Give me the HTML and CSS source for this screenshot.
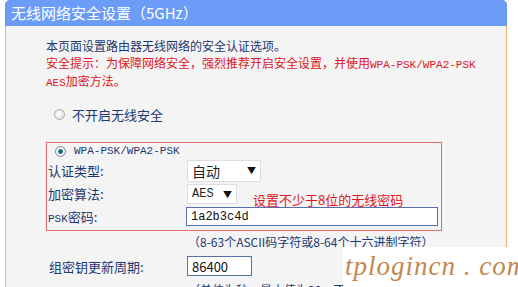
FILE: index.html
```html
<!DOCTYPE html>
<html>
<head>
    <title>无线网络安全设置</title>
    <link rel="stylesheet" href="styles.css">
</head>
<body>
<div class="panel">
    <div class="panel-title">无线网络安全设置（5GHz）</div>
    <div class="panel-body">
        <p class="intro">本页面设置路由器无线网络的安全认证选项。</p>
        <p class="warning">安全提示：为保障网络安全，强烈推荐开启安全设置，并使用<span class="mono">WPA-PSK/WPA2-PSK</span><br><span class="mono">AES</span>加密方法。</p>

        <div class="radio-row off-row">
            <span class="radio"></span>
            <span>不开启无线安全</span>
        </div>

        <div class="psk-box">
            <div class="radio-row wpa-row">
                <span class="radio checked"></span>
                <span class="mono">WPA-PSK/WPA2-PSK</span>
            </div>
            <div class="form-row">
                <span class="label">认证类型:</span>
                <span class="select select-auth">自动<span class="arrow">▼</span></span>
            </div>
            <div class="form-row">
                <span class="label">加密算法:</span>
                <span class="select select-aes"><span class="mono">AES</span><span class="arrow">▼</span></span>
                <span class="tip">设置不少于8位的无线密码</span>
            </div>
            <div class="form-row">
                <span class="label"><span class="mono">PSK</span>密码:</span>
                <span class="text-input psk-input mono">1a2b3c4d</span>
            </div>
        </div>

        <div class="hint">（8-63个ASCII码字符或8-64个十六进制字符）</div>

        <div class="form-row group-row">
            <span class="label">组密钥更新周期:</span>
            <span class="text-input period-input">86400</span>
        </div>
        <div class="hint">（单位为秒，最小值为30，不更新则为0）</div>
    </div>
</div>
<div class="watermark">tplogincn . com</div>
</body>
</html>
```

FILE: styles.css
```css
body {
    margin: 0;
    padding: 0;
    background-color: #ffffff;
    font-family: "Noto Sans CJK SC", "Liberation Sans", sans-serif;
    font-size: 12px;
    color: #1c3870;
    overflow: hidden;
    height: 287px;
}
.panel {
    margin-left: 5px;
    width: 500px;
    height: 300px;
    background: #f4f4f4;
    border-left: 1px solid #f0b26a;
    border-right: 1px solid #f0b26a;
    border-radius: 5px 5px 0 0;
}
.panel-title {
    height: 26px;
    line-height: 25px;
    background: #6b9cf7;
    color: #ffffff;
    font-size: 15px;
    padding-left: 6px;
    border-radius: 5px 5px 0 0;
    margin: 0 -1px;
}
.panel-body {
    padding: 12px 0 0 40px;
}
.mono {
    font-family: "Liberation Mono", "DejaVu Sans Mono", monospace;
    font-size: 11px;
}
.intro, .warning {
    margin: 0;
    line-height: 16px;
}
.warning {
    color: #e0141e;
    margin-top: 1px;
}
.radio-row {
    display: flex;
    align-items: center;
    gap: 7px;
}
.off-row {
    height: 20px;
    margin-top: 13px;
    padding-left: 8px;
    font-size: 13px;
}
.radio {
    width: 9px;
    height: 9px;
    border-radius: 50%;
    border: 1px solid #a9a9a9;
    background: radial-gradient(circle at 40% 40%, #ffffff, #d6d6d6);
}
.radio.checked {
    background: radial-gradient(circle, #1c4a66 0, #2f7a96 2px, #ffffff 3px, #d6d6d6 100%);
    border-color: #7a8a9a;
}
.psk-box {
    margin-top: 18px;
    width: 393px;
    height: 87px;
    border: 1px solid #e06a6a;
    padding-left: 1px;
}
.wpa-row {
    height: 16px;
    padding-left: 7px;
    gap: 8px;
}
.form-row {
    display: flex;
    align-items: center;
    height: 23px;
}
.label {
    width: 139px;
    font-size: 13px;
}
.select {
    display: flex;
    align-items: center;
    justify-content: space-between;
    background: #ffffff;
    border: 1px solid #dedede;
    padding: 0 4px;
    box-sizing: border-box;
    font-size: 14px;
    color: #222222;
}
.select-auth {
    width: 74px;
    height: 22px;
}
.select-aes {
    width: 50px;
    height: 20px;
    margin-top: 1px;
}
.select-aes .mono {
    font-size: 12px;
}
.arrow {
    font-size: 9px;
    color: #111111;
}
.tip {
    color: #e0141e;
    font-size: 13px;
    line-height: 14px;
    margin-left: 16px;
    margin-top: 13px;
}
.text-input {
    display: flex;
    align-items: center;
    background: #ffffff;
    border: 1px solid #5a6fa8;
    box-sizing: border-box;
    padding-left: 4px;
    color: #111111;
}
.psk-input {
    width: 252px;
    height: 19px;
    font-size: 12px;
    margin-left: -1px;
}
.hint {
    padding-left: 142px;
    height: 22px;
    line-height: 22px;
    font-size: 12px;
}
.group-row {
    height: 26px;
    padding-left: 3px;
}
.period-input {
    width: 65px;
    height: 20px;
    font-size: 13px;
    margin-left: -1px;
}
.watermark {
    position: absolute;
    left: 343px;
    top: 247px;
    width: 175px;
    height: 40px;
    background: #ffffff;
    font-family: "Liberation Serif", serif;
    font-style: italic;
    font-size: 27px;
    color: #c4874c;
    line-height: 38px;
    padding-left: 2px;
    letter-spacing: 1px;
    white-space: nowrap;
}
```
